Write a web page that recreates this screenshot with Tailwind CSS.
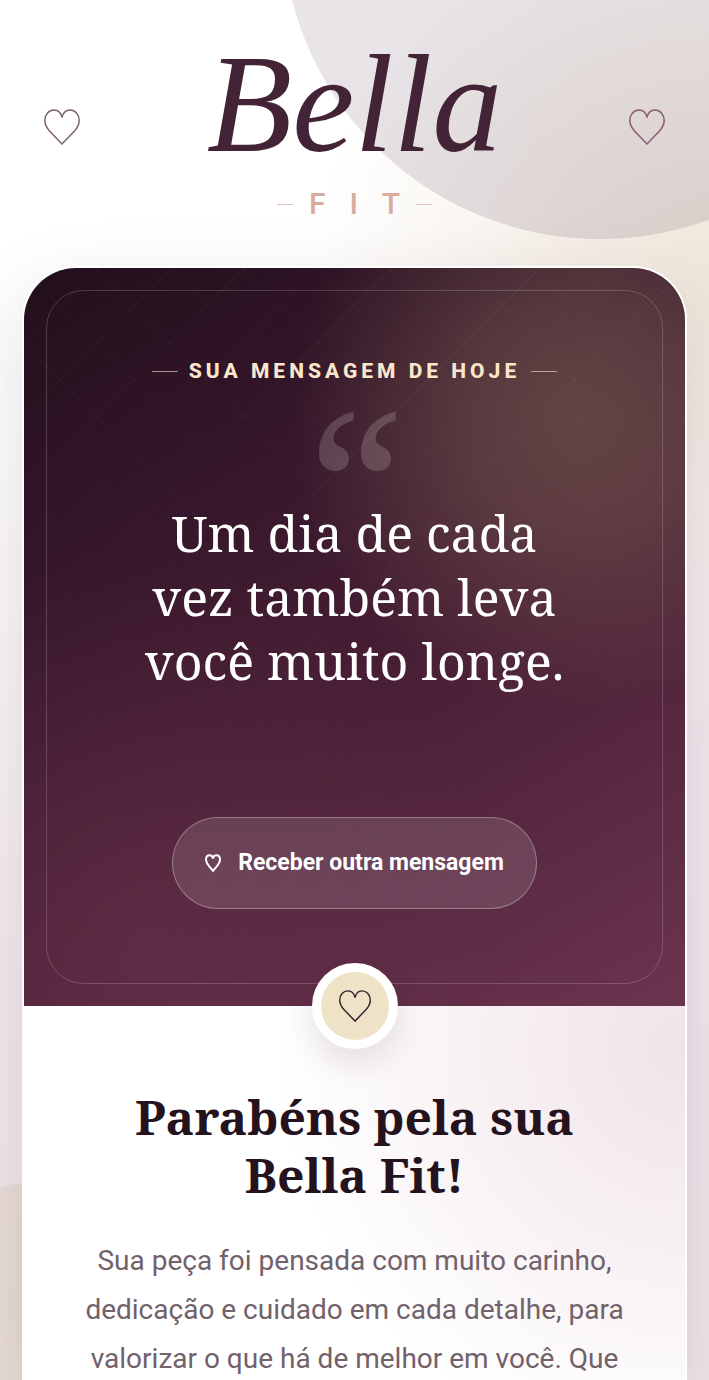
<!DOCTYPE html>
<html lang="pt-BR">
  <head>
    <meta charset="UTF-8" />
    <meta name="viewport" content="width=device-width, initial-scale=1.0" />
    <title>Bella Fit</title>
    <script src="https://cdn.jsdelivr.net/npm/@tailwindcss/browser@4"></script>
  </head>
  <body
    class="bg-white font-[Roboto,'Liberation_Sans',sans-serif] text-[#24121c]"
  >
    <div
      class="relative isolate flex min-h-screen flex-col overflow-hidden bg-[radial-gradient(circle_at_100%_20%,#f0e6da_0%,#f0e6da00_30%),linear-gradient(160deg,#ffffff_26%,#f3e9ee_62%,#f0e6eb_100%)]"
    >
      <!-- Background circles -->
      <div
        class="absolute -top-[397px] -right-[209px] -z-10 size-[636px] rounded-full bg-linear-to-b from-[#5e3f55]/13 from-45% to-[#68506a]/17"
      ></div>
      <div
        class="absolute top-[1181px] -left-[258px] -z-10 size-[636px] rounded-full bg-[#dccfb8]/40"
      ></div>

      <!-- Header -->
      <header class="flex items-center justify-between px-11 pt-9 pb-11">
        <svg viewBox="0 0 36 36" class="mb-1 size-9 overflow-visible" fill="none" stroke="#7c6372" stroke-width="1.5" aria-hidden="true">
          <path d="M18 35L5.500 22C2.500 18.500 .8 15.200 .8 11.500C.8 5.500 5 1 10 1C14 1 17 4 18 8.500C19 4 22 1 26 1C31 1 35.200 5.500 35.200 11.500C35.200 15.200 33.500 18.500 30.500 22Z" />
        </svg>
        <h1 class="text-center">
          <span
            class="block font-['Liberation_Serif',serif] text-[140px] leading-[136px] text-[#432436] italic"
            >Bella</span
          >
          <span class="mt-[14px] flex items-center justify-center gap-4">
            <span class="h-px w-4 bg-[#e3c4ba]"></span>
            <span
              class="-mr-6 text-[30px] leading-9 font-medium tracking-[24px] text-[#d9aca0]"
              >FIT</span
            >
            <span class="h-px w-4 bg-[#e3c4ba]"></span>
          </span>
        </h1>
        <svg viewBox="0 0 36 36" class="mb-1 size-9 overflow-visible" fill="none" stroke="#875d74" stroke-width="1.5" aria-hidden="true">
          <path d="M18 35L5.500 22C2.500 18.500 .8 15.200 .8 11.500C.8 5.500 5 1 10 1C14 1 17 4 18 8.500C19 4 22 1 26 1C31 1 35.200 5.500 35.200 11.500C35.200 15.200 33.500 18.500 30.500 22Z" />
        </svg>
      </header>

      <!-- Card -->
      <main
        class="mx-[22px] flex flex-1 flex-col overflow-hidden rounded-t-[54px] border-2 border-b-0 border-white bg-[radial-gradient(circle_at_100%_70%,#f0e3e8_0%,#f0e3e800_40%)] bg-white shadow-[0_30px_80px_rgba(55,25,45,0.15)]"
      >
        <!-- Message of the day -->
        <section
          class="relative isolate bg-[radial-gradient(circle_at_84%_20%,#7e625494_0%,#7e625470_14%,#7e625400_36%),radial-gradient(circle_at_16%_88%,#7a3c5850_0%,#7a3c5800_42%),linear-gradient(150deg,#220f1b_0%,#35162a_28%,#4a2036_58%,#6c344f_100%)] p-[22px]"
        >
          <div
            class="absolute inset-0 -z-10 bg-[repeating-linear-gradient(135deg,#ffffff09_0px,#ffffff09_1px,transparent_1px,transparent_52px),repeating-linear-gradient(45deg,#ffffff06_0px,#ffffff06_1px,transparent_1px,transparent_52px)] mask-[linear-gradient(#000,transparent_75%)]"
          ></div>
          <div
            class="flex flex-col items-center rounded-[38px] border border-white/18 pt-[68px] pb-[74px] text-center"
          >
            <div class="flex items-center gap-[11px]">
              <span class="h-px w-[26px] bg-[#f5e3d8]/60"></span>
              <p
                class="text-[21px] leading-6 font-extrabold tracking-[4px] text-[#fae6cb] uppercase"
              >
                Sua mensagem de hoje
              </p>
              <span class="h-px w-[26px] bg-[#f5e3d8]/60"></span>
            </div>
            <span
              class="mt-5 h-[84px] font-['Noto_Serif','Liberation_Serif',serif] text-[210px] leading-[156px] text-white/17"
              aria-hidden="true"
              >“</span
            >
            <blockquote
              id="mensagem"
              class="mt-[14px] min-h-[240px] max-w-[440px] font-['Noto_Serif','Liberation_Serif',serif] text-[50px] leading-[64px] text-white"
            >
              Um dia de cada vez também leva você muito longe.
            </blockquote>
            <button
              type="button"
              onclick="novaMensagem()"
              class="mt-[76px] flex h-[92px] items-center gap-[17px] rounded-full border border-white/30 bg-white/12 px-8 text-[23px] font-bold text-white"
            >
              <svg viewBox="0 0 16 18" class="h-[18px] w-4 overflow-visible" fill="none" stroke="currentColor" stroke-width="2" aria-hidden="true">
                <path d="M8 17C4 12 1 9.500 1 5.500C1 3 2.500 1.200 4.700 1.200C6.500 1.200 7.600 2.500 8 4.500C8.400 2.500 9.500 1.200 11.300 1.200C13.500 1.200 15 3 15 5.500C15 9.500 12 12 8 17Z" />
              </svg>
              Receber outra mensagem
            </button>
          </div>
        </section>

        <!-- Thank you -->
        <section class="relative px-14 pt-[82px] text-center">
          <div
            class="absolute -top-[43px] left-1/2 flex size-[86px] -translate-x-1/2 items-center justify-center rounded-full border-9 border-white bg-[#eee3c6] shadow-[0_14px_32px_rgba(55,25,45,0.12)]"
          >
            <svg viewBox="0 0 36 36" class="size-8 overflow-visible" fill="none" stroke="#3a1c2c" stroke-width="1.6" aria-hidden="true">
              <path d="M18 35L5.500 22C2.500 18.500 .8 15.200 .8 11.500C.8 5.500 5 1 10 1C14 1 17 4 18 8.500C19 4 22 1 26 1C31 1 35.200 5.500 35.200 11.500C35.200 15.200 33.500 18.500 30.500 22Z" />
            </svg>
          </div>
          <h2
            class="mx-auto max-w-[460px] font-['Noto_Serif','Liberation_Serif',serif] text-[48px] leading-[58px] font-bold"
          >
            Parabéns pela sua Bella Fit!
          </h2>
          <p class="mt-8 text-[28px] leading-[49px] text-[#71616a]">
            Sua peça foi pensada com muito carinho, dedicação e cuidado em cada
            detalhe, para valorizar o que há de melhor em você. Que
          </p>
        </section>
      </main>
    </div>

    <script>
      const mensagens = [
        "Um dia de cada vez também leva você muito longe.",
        "Você é mais forte do que imagina.",
        "Cuidar de você também é prioridade.",
      ];
      let atual = 0;

      function novaMensagem() {
        atual = (atual + 1) % mensagens.length;
        document.getElementById("mensagem").innerText = mensagens[atual];
      }
    </script>
  </body>
</html>
